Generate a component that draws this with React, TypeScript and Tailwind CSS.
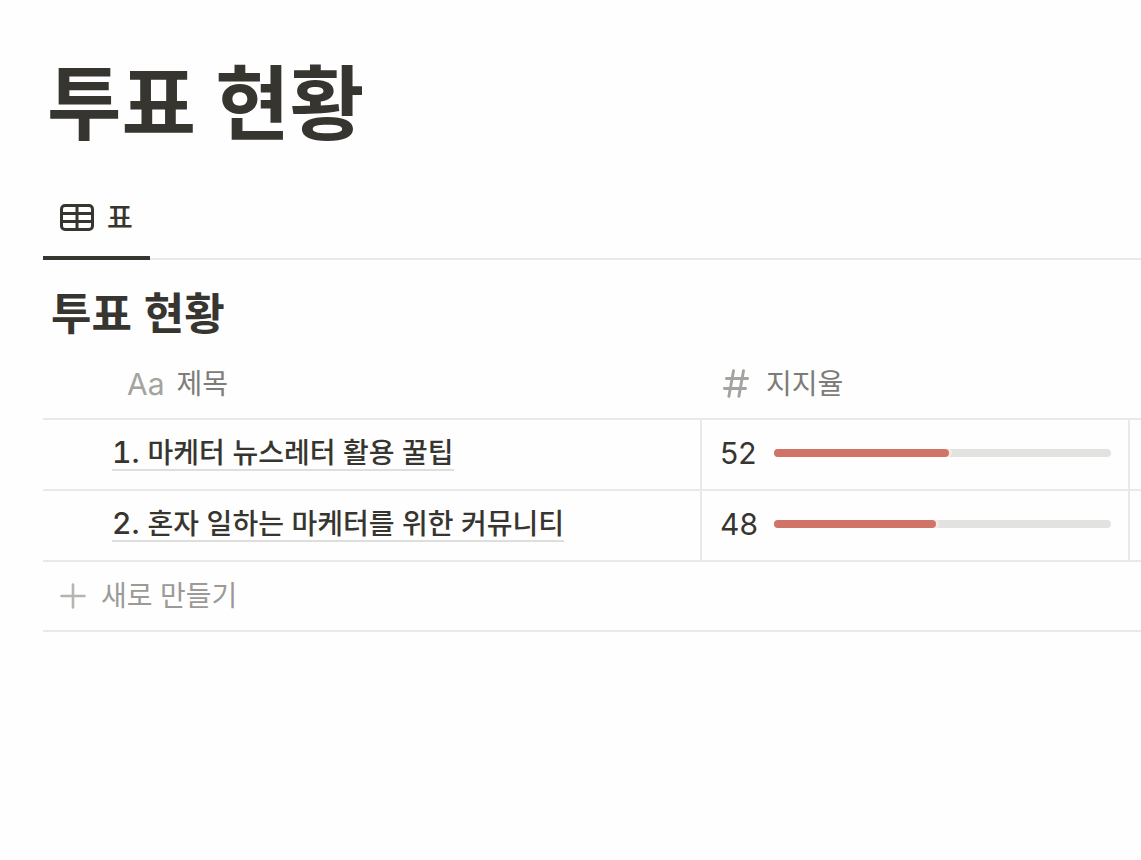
type Row = { id: number; title: string; support: number };

const rows: Row[] = [
  { id: 1, title: "마케터 뉴스레터 활용 꿀팁", support: 52 },
  { id: 2, title: "혼자 일하는 마케터를 위한 커뮤니티", support: 48 },
];

function TableIcon() {
  return (
    <svg className="h-7 w-9 shrink-0" viewBox="0 0 36 28" fill="none" stroke="currentColor" strokeWidth="3" aria-hidden="true">
      <rect x="2.5" y="1.5" width="31" height="24" rx="3.5" />
      <path d="M3 9.5H33M3 17.5H33M18 2V26" />
    </svg>
  );
}

function HashIcon() {
  return (
    <svg className="h-8 w-7 shrink-0 text-[#a3a3a0]" viewBox="0 0 28 32" fill="none" stroke="currentColor" strokeWidth="2.9" strokeLinecap="round" aria-hidden="true">
      <path d="M4.4 10.5H25.6M2.4 20.5H23.6M11.5 2.7L6.9 28.3M21.5 2.7L16.9 28.3" />
    </svg>
  );
}

function PlusIcon() {
  return (
    <svg className="h-7 w-7 shrink-0 text-[#b4b4b1]" viewBox="0 0 28 28" fill="none" stroke="currentColor" strokeWidth="2.6" strokeLinecap="round" aria-hidden="true">
      <path d="M14 2.5V25.5M2.5 14H25.5" />
    </svg>
  );
}

function SupportBar({ value }: { value: number }) {
  return (
    <div className="flex items-center gap-[18px]">
      <span className="w-9 shrink-0 text-[30px]">{value}</span>
      <div className="h-2 flex-1 rounded-full bg-[#e2e2e0]">
        <div className="h-2 rounded-full bg-[#d07468] shadow-[3px_0_0_#fae8e7]" style={{ width: `${value}%` }} />
      </div>
    </div>
  );
}

export default function App() {
  return (
    <main className="min-h-screen overflow-hidden bg-[#fefefe] pt-14 pl-[43px] font-[Inter,'Noto_Sans_CJK_KR',sans-serif] text-[28px] leading-9 text-[#37352f]">
      <h1 className="pl-1 text-[81px] leading-24 font-bold">투표 현황</h1>

      <nav className="mt-6 flex border-b-2 border-[#e9e9e7]">
        <button type="button" className="-mb-0.5 flex h-[84px] items-center gap-3 border-b-4 border-[#37352f] pt-1 pr-[17px] pl-4 font-medium">
          <TableIcon />
          표
        </button>
      </nav>

      <h2 className="mt-6 pl-2 text-[44px] leading-[60px] font-bold tabular-nums">투표 현황</h2>

      <table className="w-full table-fixed border-separate border-spacing-0 text-left">
        <colgroup>
          <col className="w-[659px]" />
          <col className="w-[428px]" />
          <col />
        </colgroup>
        <thead>
          <tr className="h-[76px] text-[#7d7c78]">
            <th scope="col" className="border-b-2 border-[#e9e9e7] pt-1.5 pl-[84px] font-normal">
              <span className="flex items-center gap-3">
                <span className="text-[30px] text-[#a3a3a0]" aria-hidden="true">Aa</span>
                제목
              </span>
            </th>
            <th scope="col" className="border-b-2 border-[#e9e9e7] pt-1.5 pl-5 font-normal">
              <span className="flex items-center gap-4">
                <HashIcon />
                지지율
              </span>
            </th>
            <td className="border-b-2 border-[#e9e9e7]" />
          </tr>
        </thead>
        <tbody>
          {rows.map((row) => (
            <tr key={row.id} className="h-[71px]">
              <td className="border-r-2 border-b-2 border-[#e9e9e7] pb-[3px] pl-[69px] font-medium tabular-nums">
                <a href={`#row-${row.id}`} className="inline-block border-b-2 border-[#dededc] leading-8">
                  <span className="text-[30px]">{row.id}. </span>
                  {row.title}
                </a>
              </td>
              <td className="border-r-2 border-b-2 border-[#e9e9e7] pr-[17px] pb-[3px] pl-[18px]">
                <SupportBar value={row.support} />
              </td>
              <td className="border-b-2 border-[#e9e9e7]" />
            </tr>
          ))}
        </tbody>
      </table>

      <button type="button" className="flex h-[70px] w-full items-center gap-3.5 border-b-2 border-[#e9e9e7] pl-4 text-[#9b9a97] tabular-nums">
        <PlusIcon />
        새로 만들기
      </button>
    </main>
  );
}
